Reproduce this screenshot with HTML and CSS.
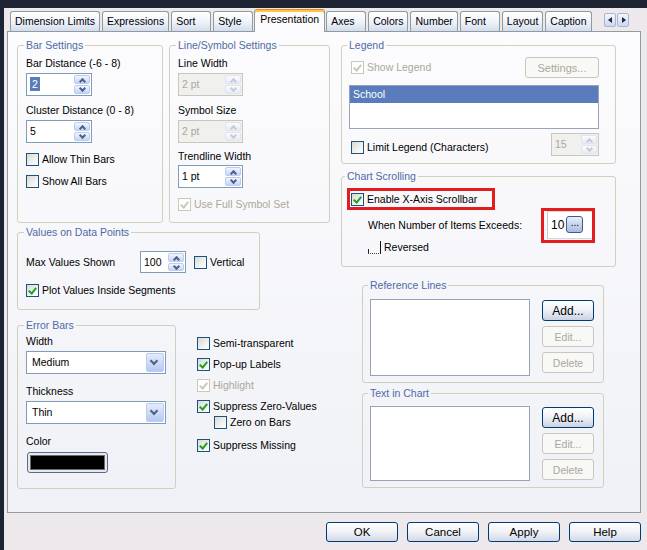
FILE: index.html
```html
<!DOCTYPE html>
<html lang="en">
<head>
  <meta charset="UTF-8" />
  <meta name="viewport" content="width=device-width, initial-scale=1.0" />
  <title>Chart Properties - Presentation</title>
  <link rel="stylesheet" href="styles.css">
</head>
<body>
  <div class="dialog">
    <div class="tabs">
      <div class="tab">Dimension Limits</div>
      <div class="tab">Expressions</div>
      <div class="tab">Sort</div>
      <div class="tab">Style</div>
      <div class="tab sel">Presentation</div>
      <div class="tab">Axes</div>
      <div class="tab">Colors</div>
      <div class="tab">Number</div>
      <div class="tab">Font</div>
      <div class="tab">Layout</div>
      <div class="tab">Caption</div>
      <div class="tab-arrows"><span class="ta left"></span><span class="ta right"></span></div>
    </div>

    <div class="panel">
      <div class="col-left">
        <div class="row-top">
          <fieldset class="grp bar-settings">
            <legend>Bar Settings</legend>
            <div class="lbl">Bar Distance (-6 - 8)</div>
            <div class="spin w66 mt3"><span class="val"><span class="hl">2</span></span><span class="arrows"><i class="up"></i><i class="dn"></i></span></div>
            <div class="lbl mt8">Cluster Distance (0 - 8)</div>
            <div class="spin w66 mt3"><span class="val">5</span><span class="arrows"><i class="up"></i><i class="dn"></i></span></div>
            <label class="chk mt10"><span class="box"></span>Allow Thin Bars</label>
            <label class="chk mt9"><span class="box"></span>Show All Bars</label>
          </fieldset>

          <fieldset class="grp line-settings">
            <legend>Line/Symbol Settings</legend>
            <div class="lbl">Line Width</div>
            <div class="spin w65 mt3 off"><span class="val">2 pt</span><span class="arrows"><i class="up"></i><i class="dn"></i></span></div>
            <div class="lbl mt8">Symbol Size</div>
            <div class="spin w65 mt3 off"><span class="val">2 pt</span><span class="arrows"><i class="up"></i><i class="dn"></i></span></div>
            <div class="lbl mt7">Trendline Width</div>
            <div class="spin w65 mt2"><span class="val">1 pt</span><span class="arrows"><i class="up"></i><i class="dn"></i></span></div>
            <label class="chk off mt10"><span class="box on"></span>Use Full Symbol Set</label>
          </fieldset>
        </div>

        <fieldset class="grp values">
          <legend>Values on Data Points</legend>
          <div class="values-row">
            <span class="max-label">Max Values Shown</span>
            <div class="spin w46 h22"><span class="val">100</span><span class="arrows"><i class="up"></i><i class="dn"></i></span></div>
            <label class="chk ml8"><span class="box"></span>Vertical</label>
          </div>
          <label class="chk mt11"><span class="box on"></span>Plot Values Inside Segments</label>
        </fieldset>

        <div class="row-bottom">
          <fieldset class="grp error-bars">
            <legend>Error Bars</legend>
            <div class="lbl">Width</div>
            <div class="combo mt3"><span class="val">Medium</span><i class="drop"></i></div>
            <div class="lbl mt11">Thickness</div>
            <div class="combo mt3"><span class="val">Thin</span><i class="drop"></i></div>
            <div class="lbl mt11">Color</div>
            <div class="colorbtn mt4"><span></span></div>
          </fieldset>

          <div class="checks">
            <label class="chk"><span class="box"></span>Semi-transparent</label>
            <label class="chk mt8"><span class="box on"></span>Pop-up Labels</label>
            <label class="chk off mt8"><span class="box on"></span>Highlight</label>
            <label class="chk mt8"><span class="box on"></span>Suppress Zero-Values</label>
            <label class="chk sub mt3"><span class="box"></span>Zero on Bars</label>
            <label class="chk mt10"><span class="box on"></span>Suppress Missing</label>
          </div>
        </div>
      </div>

      <div class="col-right">
        <fieldset class="grp legend-grp">
          <legend>Legend</legend>
          <div class="legend-top">
            <label class="chk off ml2"><span class="box on"></span>Show Legend</label>
            <button class="btn dis settings">Settings...</button>
          </div>
          <div class="list legend-list mt7"><div class="item sel">School</div></div>
          <div class="legend-bottom">
            <label class="chk ml2 low"><span class="box"></span>Limit Legend (Characters)</label>
            <div class="spin w48 off"><span class="val">15</span><span class="arrows"><i class="up"></i><i class="dn"></i></span></div>
          </div>
        </fieldset>

        <fieldset class="grp scrolling">
          <legend>Chart Scrolling</legend>
          <div class="redbox enable-box">
            <label class="chk"><span class="box on"></span>Enable X-Axis Scrollbar</label>
          </div>
          <div class="exceeds-row">
            <span>When Number of Items Exceeds:</span>
            <div class="redbox items-box">
              <div class="items-field">10<span class="dots">...</span></div>
            </div>
          </div>
          <label class="chk flat"><span class="box"></span>Reversed</label>
        </fieldset>

        <fieldset class="grp side ref-lines">
          <legend>Reference Lines</legend>
          <div class="list-row">
            <div class="list side-list"></div>
            <div class="side-btns">
              <button class="btn">Add...</button>
              <button class="btn dis">Edit...</button>
              <button class="btn dis">Delete</button>
            </div>
          </div>
        </fieldset>

        <fieldset class="grp side text-chart">
          <legend>Text in Chart</legend>
          <div class="list-row">
            <div class="list side-list short"></div>
            <div class="side-btns">
              <button class="btn">Add...</button>
              <button class="btn dis">Edit...</button>
              <button class="btn dis">Delete</button>
            </div>
          </div>
        </fieldset>
      </div>
    </div>

    <div class="actions">
      <button class="btn main">OK</button>
      <button class="btn main">Cancel</button>
      <button class="btn main">Apply</button>
      <button class="btn main">Help</button>
    </div>
  </div>
</body>
</html>
```

FILE: styles.css
```css
body {
  margin: 0;
  background: #1c2333;
  font-family: 'Liberation Sans', Arial, sans-serif;
  font-size: 10.5px;
  color: #000;
}
.dialog {
  margin: 8px 0 0 4px;
  height: 542px;
  padding: 1px 6px 0 0;
  box-sizing: border-box;
  background: #ece8ec;
}

/* tabs */
.tabs {
  display: flex;
  align-items: flex-end;
  height: 22px;
  padding-left: 6px;
}
.tab {
  min-width: 40px;
  height: 20px;
  box-sizing: border-box;
  padding: 0 4px;
  margin-right: 2px;
  line-height: 19px;
  border: 1px solid #919b9c;
  border-bottom: none;
  border-radius: 3px 3px 0 0;
  background: linear-gradient(#ffffff, #eef2f9 55%, #d2dcee);
  white-space: nowrap;
}
.tab.sel {
  position: relative;
  z-index: 1;
  height: 23px;
  margin: 0 1px -1px -1px;
  padding: 0 5px;
  line-height: 18px;
  background: #fcfcfe;
  border-top: 1px solid #e68b2c;
  box-shadow: inset 0 2px 0 #ffc73c;
}
.tab-arrows {
  display: flex;
  gap: 1px;
  margin: 4px 12px 0 auto;
  align-self: flex-start;
}
.ta {
  position: relative;
  width: 12px;
  height: 14px;
  box-sizing: border-box;
  border: 1px solid #a8b6cf;
  border-radius: 2px;
  background: linear-gradient(#f4f7fd, #cbd7ef);
}
.ta::after {
  content: '';
  position: absolute;
  top: 3px;
  left: 3px;
  border: 3px solid transparent;
}
.ta.left::after { border-right: 4px solid #1f2a44; left: 0; }
.ta.right::after { border-left: 4px solid #1f2a44; left: 4px; }

/* tab page */
.panel {
  display: flex;
  gap: 11px;
  margin-left: 3px;
  height: 482px;
  box-sizing: border-box;
  padding: 7px 0 0 9px;
  border: 1px solid #919b9c;
  background: linear-gradient(#fcfcfe, #f0f1f6);
}
.col-left { width: 313px; }
.col-right { width: 275px; }
.row-top, .row-bottom { display: flex; }
.row-top { gap: 6px; }
.row-bottom { margin-top: 9px; }

/* group boxes */
.grp {
  margin: 0;
  min-width: 0;
  box-sizing: border-box;
  border: 1px solid #d0d0bf;
  border-radius: 3px;
  padding: 5px 8px 0 8px;
}
.grp legend {
  padding: 0 2px;
  margin-left: -2px;
  line-height: 13px;
  color: #4e6aa4;
}
.bar-settings { width: 146px; height: 184px; }
.line-settings { width: 161px; height: 184px; }
.values { width: 243px; height: 84px; margin-top: 3px; padding-top: 12px; }
.error-bars { width: 159px; height: 170px; padding-top: 3px; }
.legend-grp { height: 125px; padding: 5px 16px 0 7px; }
.scrolling { height: 97px; margin-top: 6px; padding: 5px 5px 0 5px; }
.side { width: 242px; margin-left: 21px; padding-left: 7px; }
.ref-lines { height: 104px; margin-top: 12px; padding-top: 7px; }
.text-chart { height: 101px; margin-top: 4px; padding-top: 6px; }

.lbl { line-height: 13px; height: 13px; white-space: nowrap; }
.mt2 { margin-top: 2px; }
.mt3 { margin-top: 3px; }
.mt4 { margin-top: 4px; }
.mt7 { margin-top: 7px; }
.mt8 { margin-top: 8px; }
.mt9 { margin-top: 9px; }
.mt10 { margin-top: 10px; }
.mt11 { margin-top: 11px; }
.ml2 { margin-left: 2px; }
.ml8 { margin-left: 8px; }

/* check boxes */
.chk {
  display: flex;
  align-items: center;
  gap: 3px;
  height: 13px;
  line-height: 13px;
  white-space: nowrap;
}
.box {
  position: relative;
  flex: none;
  width: 13px;
  height: 13px;
  box-sizing: border-box;
  border: 1px solid #1c5180;
  background: linear-gradient(135deg, #d8d8d4, #f6f6f4 70%, #fff);
}
.box.on::after {
  content: '';
  position: absolute;
  left: 3px;
  top: 1px;
  width: 3px;
  height: 6px;
  border: solid #21a121;
  border-width: 0 2px 2px 0;
  transform: rotate(40deg);
}
.chk.off { color: #aca899; }
.chk.off .box { border-color: #cac8bb; background: #fff; }
.chk.off .box.on::after { border-color: #cac8bb; }
.chk.sub { margin-left: 17px; }
.chk.low { margin-top: 5px; }
.chk.flat { margin: -1px 0 0 21px; }
.chk.flat .box {
  border: none;
  border-right: 1px solid #111;
  border-bottom: 1px dotted #444;
  background: transparent;
}
.chk.flat .box::before {
  content: '';
  position: absolute;
  left: 0;
  bottom: 0;
  width: 1px;
  height: 4px;
  background: #222;
}

/* spinners */
.spin {
  display: flex;
  height: 23px;
  box-sizing: border-box;
  padding: 1px;
  border: 1px solid #7f9db9;
  background: #fff;
}
.spin .val { flex: 1; padding-left: 2px; line-height: 19px; }
.spin .hl { background: #5a7cbc; color: #fff; padding: 1px 2px; }
.w46 { width: 46px; }
.w48 { width: 48px; }
.w65 { width: 65px; }
.w66 { width: 66px; }
.h22 { height: 22px; }
.arrows {
  display: flex;
  flex-direction: column;
  width: 16px;
  gap: 1px;
}
.arrows i {
  position: relative;
  flex: 1;
  border: 1px solid #bccbef;
  border-radius: 2px;
  background: linear-gradient(#f2f6fe, #c5d4f6);
}
.arrows i::after {
  content: '';
  position: absolute;
  left: 5px;
  width: 3px;
  height: 3px;
  border: solid #4d6185;
}
.arrows .up::after { top: 3px; border-width: 2px 0 0 2px; transform: rotate(45deg); }
.arrows .dn::after { top: 0; border-width: 0 2px 2px 0; transform: rotate(45deg); }
.spin.off { background: #f0f0ee; border-color: #c9c7ba; color: #aca899; }
.spin.off .arrows i { border-color: #e0e4ee; background: linear-gradient(#fafbfd, #e6ebf5); }
.spin.off .arrows i::after { border-color: #c4cad8; }

/* max values row */
.values-row { display: flex; align-items: center; height: 22px; }
.max-label { width: 114px; white-space: nowrap; }

/* combo boxes */
.combo {
  display: flex;
  width: 140px;
  height: 23px;
  box-sizing: border-box;
  padding: 1px;
  border: 1px solid #7f9db9;
  background: #fff;
}
.combo .val { flex: 1; padding-left: 4px; line-height: 19px; }
.drop {
  position: relative;
  width: 16px;
  border: 1px solid #bccbef;
  border-radius: 2px;
  background: linear-gradient(#e4ebfc, #b7c9f2);
}
.drop::after {
  content: '';
  position: absolute;
  left: 4px;
  top: 4px;
  width: 4px;
  height: 4px;
  border: solid #4d6185;
  border-width: 0 2px 2px 0;
  transform: rotate(45deg);
}

.colorbtn {
  width: 81px;
  height: 21px;
  margin-left: 1px;
  box-sizing: border-box;
  padding: 2px;
  border: 1px solid #56698f;
  border-radius: 3px;
  background: #e6e8ee;
}
.colorbtn span {
  display: block;
  height: 100%;
  box-sizing: border-box;
  border: 1px solid #6b6b6b;
  background: #000;
}

.checks { margin-left: 21px; padding-top: 18px; }

/* legend group */
.legend-top, .legend-bottom {
  display: flex;
  justify-content: space-between;
  align-items: center;
}
.legend-top { height: 21px; }
.legend-bottom { height: 23px; margin-top: 4px; }
.list {
  box-sizing: border-box;
  border: 1px solid #98a4b6;
  background: #fff;
}
.legend-list { height: 44px; }
.item { height: 17px; line-height: 16px; padding-left: 3px; }
.item.sel { background: #5a7cbc; color: #fff; }

/* chart scrolling */
.redbox { box-sizing: border-box; border: 3px solid #e31c1c; }
.enable-box {
  display: flex;
  align-items: center;
  width: 148px;
  height: 22px;
  padding-left: 1px;
}
.exceeds-row {
  display: flex;
  justify-content: space-between;
  align-items: center;
  height: 34px;
  margin: -2px 15px 0 21px;
}
.items-box { width: 54px; height: 35px; padding: 0 0 0 3px; }
.items-field {
  display: flex;
  align-items: center;
  height: 26px;
  padding-left: 3px;
  border-left: 1px solid #c8c8c8;
  border-top: 1px solid #d8d8d8;
  border-bottom: 1px solid #d8d8d8;
  background: #fff;
  font-size: 12px;
}
.dots {
  width: 17px;
  height: 17px;
  margin-left: 2px;
  box-sizing: border-box;
  border: 1px solid #3d5a8c;
  border-radius: 3px;
  background: linear-gradient(#e9eefa, #a9bbe0);
  font-size: 10px;
  line-height: 12px;
  text-align: center;
}

/* reference lines / text in chart */
.list-row { display: flex; }
.side-list { width: 160px; height: 77px; }
.side-list.short { height: 75px; }
.side-btns {
  display: flex;
  flex-direction: column;
  gap: 5px;
  margin-left: 12px;
  padding-top: 1px;
}

/* buttons */
.btn {
  width: 52px;
  height: 21px;
  box-sizing: border-box;
  padding: 0;
  border: 1px solid #003c74;
  border-radius: 3px;
  background: linear-gradient(#ffffff, #f1f2f6 45%, #c9d2e4);
  font-family: inherit;
  font-size: 12px;
  color: #000;
}
.btn.dis {
  border-color: #c9c7ba;
  background: #f8f8f7;
  color: #aca899;
  font-size: 10.5px;
}
.btn.settings { width: 74px; font-size: 11px; }

.actions {
  display: flex;
  justify-content: flex-end;
  gap: 9px;
  margin-top: 9px;
}
.btn.main {
  width: 72px;
  height: 20px;
  font-size: 11.5px;
  background: linear-gradient(#ffffff, #f2f3f7 45%, #d3d9e7);
}
```
